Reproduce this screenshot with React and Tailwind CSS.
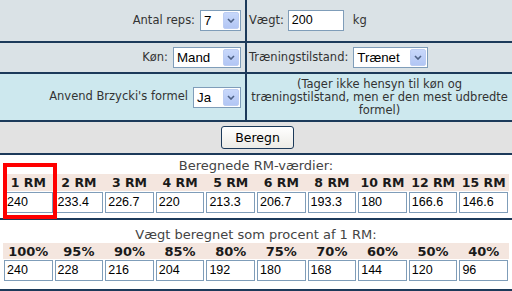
import React from 'react'

const labelFont = { fontFamily: '"DejaVu Sans", Verdana, sans-serif' }

const rmHeads = ['1 RM', '2 RM', '3 RM', '4 RM', '5 RM', '6 RM', '8 RM', '10 RM', '12 RM', '15 RM']
const rmValues = ['240', '233.4', '226.7', '220', '213.3', '206.7', '193.3', '180', '166.6', '146.6']
const pctHeads = ['100%', '95%', '90%', '85%', '80%', '75%', '70%', '60%', '50%', '40%']
const pctValues = ['240', '228', '216', '204', '192', '180', '168', '144', '120', '96']

function Chevron() {
  return (
    <svg width="8" height="5" viewBox="0 0 8 5" fill="none">
      <path d="M1 1 L4 4 L7 1" stroke="#4d6185" strokeWidth="1.6" />
    </svg>
  )
}

function Select({ value, className }) {
  return (
    <div className={`flex h-[21px] border border-[#7f9db9] bg-white ${className}`}>
      <span className="flex-1 pl-[3px] text-[13.3px] leading-[19px] text-black font-['Liberation_Sans',Arial,sans-serif]">
        {value}
      </span>
      <div className="m-[1px] flex w-[16px] items-center justify-center rounded-[2px] border border-[#bccdf3] bg-linear-to-b from-[#c8d8fb] to-[#b2c6f4]">
        <Chevron />
      </div>
    </div>
  )
}

function Field({ value }) {
  return (
    <div className="mx-[1px] h-[21px] border border-[#7f9db9] bg-white pl-[2px] text-[12.5px] leading-[19px] text-black font-['Liberation_Sans',Arial,sans-serif]">
      {value}
    </div>
  )
}

function ResultTable({ heads, values, headHeight, headSize }) {
  return (
    <div className="px-[3px]">
      <div className={`grid grid-cols-10 bg-[#f4e6df] ${headHeight}`}>
        {heads.map((h) => (
          <div key={h} className={`text-center font-bold leading-[17px] text-[#1a1a1a] ${headSize}`} style={labelFont}>
            {h}
          </div>
        ))}
      </div>
      <div className="mt-[1px] grid grid-cols-10">
        {values.map((v, i) => (
          <Field key={i} value={v} />
        ))}
      </div>
    </div>
  )
}

export default function App() {
  return (
    <div className="flex h-[291px] w-[512px] flex-col overflow-hidden bg-white text-[11.5px] text-[#333]" style={labelFont}>
      {/* Antal reps / Vægt */}
      <div className="flex h-[43px] border-b-2 border-[#1c3a5a] bg-[#dae2e6]">
        <div className="flex w-[247px] items-center justify-end gap-[5px] border-r-2 border-[#1c3a5a] pr-[4px]">
          <span>Antal reps:</span>
          <Select value="7" className="w-[41px]" />
        </div>
        <div className="flex flex-1 items-center pl-[2px]">
          <span>Vægt:</span>
          <div className="ml-[4px] h-[21px] w-[56px] border border-[#7f9db9] bg-white pl-[3px] text-[12.5px] leading-[19px] text-black font-['Liberation_Sans',Arial,sans-serif]">
            200
          </div>
          <span className="ml-[9px]">kg</span>
        </div>
      </div>

      {/* Køn / Træningstilstand */}
      <div className="flex h-[31px] border-b-2 border-[#1c3a5a] bg-[#dae2e6]">
        <div className="flex w-[247px] items-center justify-end gap-[5px] border-r-2 border-[#1c3a5a] pr-[4px]">
          <span>Køn:</span>
          <Select value="Mand" className="w-[68px]" />
        </div>
        <div className="flex flex-1 items-center gap-[5px] pl-[2px]">
          <span>Træningstilstand:</span>
          <Select value="Trænet" className="w-[75px]" />
        </div>
      </div>

      {/* Brzycki */}
      <div className="flex h-[48px] border-b-2 border-[#1c3a5a] bg-[#cde8ee]">
        <div className="flex w-[247px] items-center justify-end gap-[5px] border-r-2 border-[#1c3a5a] pr-[4px]">
          <span>Anvend Brzycki's formel</span>
          <Select value="Ja" className="w-[48px]" />
        </div>
        <div className="flex flex-1 flex-col items-center justify-center leading-[13px]">
          <span className="whitespace-nowrap">(Tager ikke hensyn til køn og</span>
          <span className="whitespace-nowrap">træningstilstand, men er den mest udbredte</span>
          <span className="whitespace-nowrap">formel)</span>
        </div>
      </div>

      {/* Beregn */}
      <div className="flex h-[33px] items-center justify-center border-b-2 border-[#1c3a5a] bg-[#e2e2e2]">
        <button className="ml-[3px] h-[23px] w-[73px] rounded-[3px] border border-[#1c3a5a] bg-linear-to-b from-white to-[#ecebe6] text-[12.5px] leading-[21px] text-black" style={labelFont}>
          Beregn
        </button>
      </div>

      {/* RM-værdier */}
      <div className="relative h-[65px] border-b-2 border-[#1c3a5a] pt-[3px]">
        <div className="text-center text-[13px] leading-[16px] text-[#444]">Beregnede RM-værdier:</div>
        <ResultTable heads={rmHeads} values={rmValues} headHeight="h-[17px]" headSize="text-[12.5px]" />
        <div className="absolute left-[3px] top-[8px] h-[56px] w-[54px] border-4 border-[#f00]" />
      </div>

      {/* Procent */}
      <div className="h-[71px] border-b-2 border-[#1c3a5a] pt-[7px]">
        <div className="text-center text-[13px] leading-[16px] text-[#444]">Vægt beregnet som procent af 1 RM:</div>
        <ResultTable heads={pctHeads} values={pctValues} headHeight="h-[16px]" headSize="text-[13px]" />
      </div>
    </div>
  )
}
